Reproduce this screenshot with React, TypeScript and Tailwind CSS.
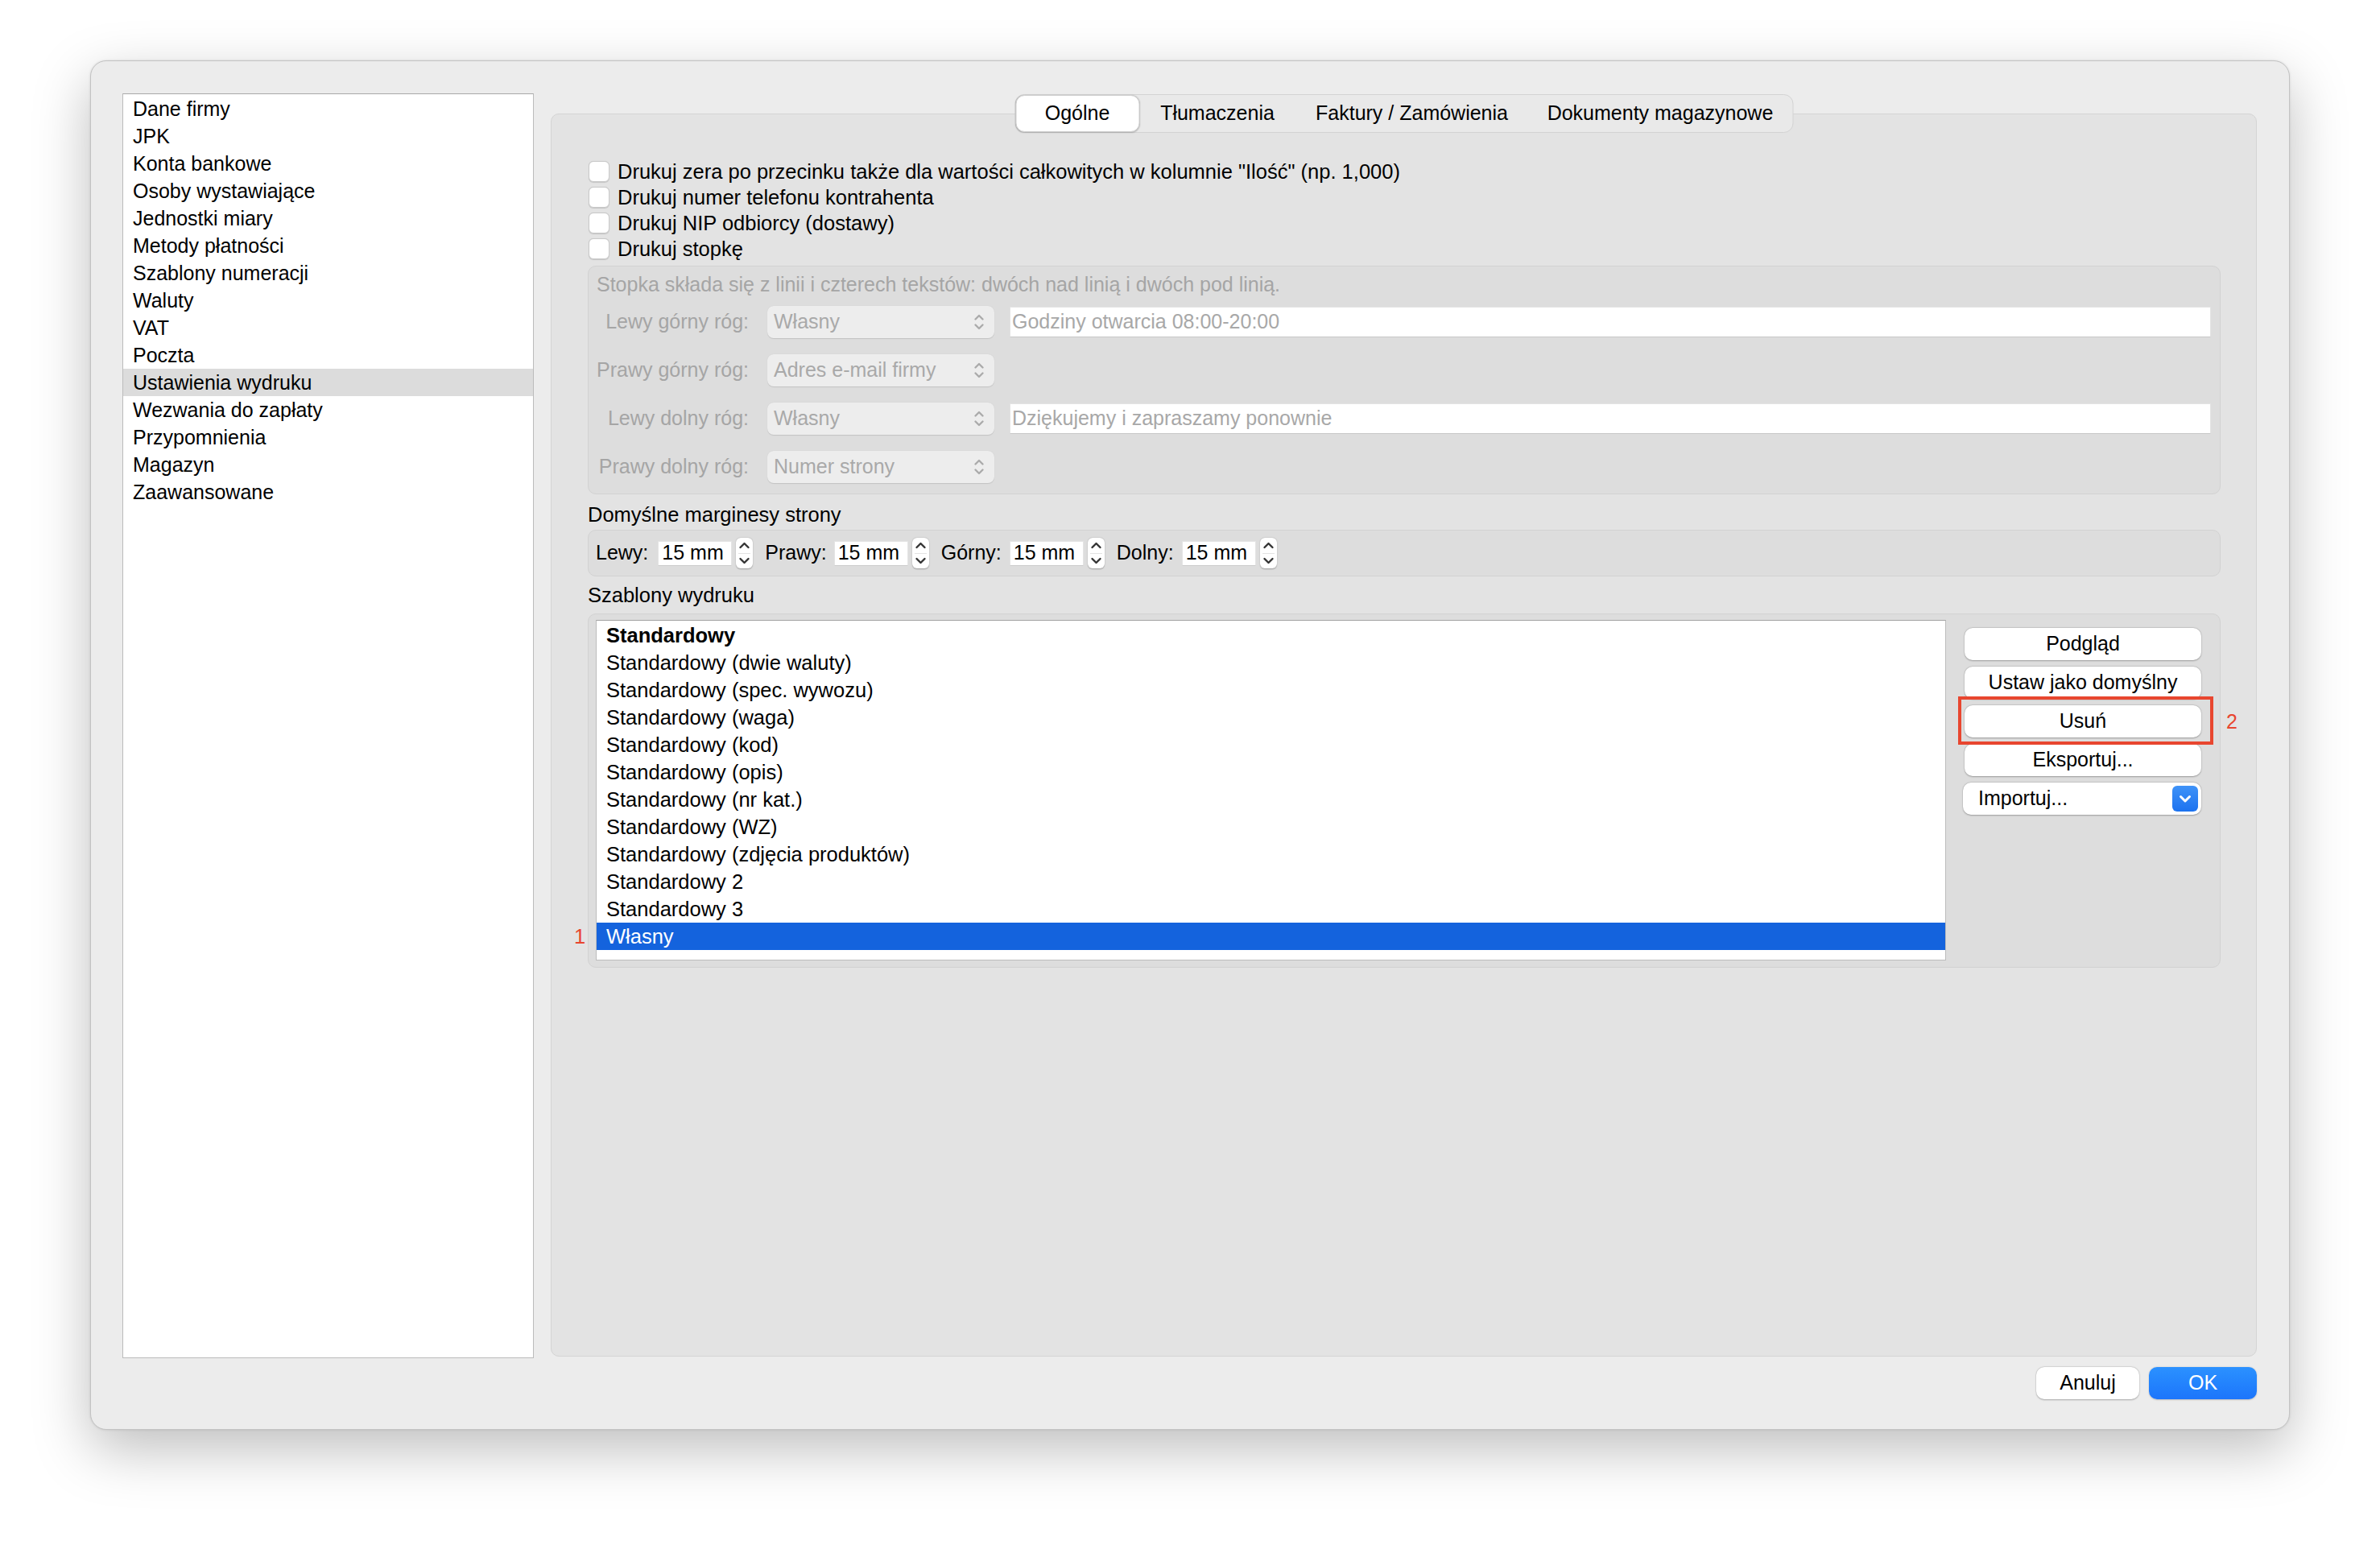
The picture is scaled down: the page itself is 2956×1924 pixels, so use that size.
import type { ReactNode } from "react";

const sidebarItems = [
  "Dane firmy",
  "JPK",
  "Konta bankowe",
  "Osoby wystawiające",
  "Jednostki miary",
  "Metody płatności",
  "Szablony numeracji",
  "Waluty",
  "VAT",
  "Poczta",
  "Ustawienia wydruku",
  "Wezwania do zapłaty",
  "Przypomnienia",
  "Magazyn",
  "Zaawansowane"
];

const tabs = [
  { label: "Ogólne", width: "w-[154px]", selected: true },
  { label: "Tłumaczenia", width: "w-[194px]", selected: false },
  { label: "Faktury / Zamówienia", width: "w-[289px]", selected: false },
  { label: "Dokumenty magazynowe", width: "w-[328px]", selected: false }
];

const checkboxes = [
  'Drukuj zera po przecinku także dla wartości całkowitych w kolumnie "Ilość" (np. 1,000)',
  "Drukuj numer telefonu kontrahenta",
  "Drukuj NIP odbiorcy (dostawy)",
  "Drukuj stopkę"
];

const footerRows: Array<{ label: string; value: string; text: string | null }> = [
  { label: "Lewy górny róg:", value: "Własny", text: "Godziny otwarcia 08:00-20:00" },
  { label: "Prawy górny róg:", value: "Adres e-mail firmy", text: null },
  { label: "Lewy dolny róg:", value: "Własny", text: "Dziękujemy i zapraszamy ponownie" },
  { label: "Prawy dolny róg:", value: "Numer strony", text: null }
];

const margins = [
  { label: "Lewy:", gap: "ml-[12px]" },
  { label: "Prawy:", gap: "ml-[9px]" },
  { label: "Górny:", gap: "ml-[10px]" },
  { label: "Dolny:", gap: "ml-[10px]" }
];

const templates = [
  "Standardowy",
  "Standardowy (dwie waluty)",
  "Standardowy (spec. wywozu)",
  "Standardowy (waga)",
  "Standardowy (kod)",
  "Standardowy (opis)",
  "Standardowy (nr kat.)",
  "Standardowy (WZ)",
  "Standardowy (zdjęcia produktów)",
  "Standardowy 2",
  "Standardowy 3",
  "Własny"
];

function UpDownChevrons({ className }: { className?: string }): JSX.Element {
  return (
    <svg viewBox="0 0 14 26" className={className} fill="none" strokeLinecap="round" strokeLinejoin="round">
      <path d="M2.5 9.5 L7 5 L11.5 9.5" stroke="currentColor" strokeWidth="2.4" />
      <path d="M2.5 16.5 L7 21 L11.5 16.5" stroke="currentColor" strokeWidth="2.4" />
    </svg>
  );
}

function Stepper(): JSX.Element {
  return (
    <div className="relative ml-[5px] flex h-[38px] w-[21px] flex-col items-center justify-between rounded-[6px] bg-white shadow-[0_0.5px_1.5px_rgba(0,0,0,0.3)]">
      <svg viewBox="0 0 21 19" className="h-[19px] w-[21px]" fill="none" strokeLinecap="round" strokeLinejoin="round">
        <path d="M5.5 12 L10.5 7 L15.5 12" stroke="#333" strokeWidth="2.4" />
      </svg>
      <div className="absolute left-[3px] right-[3px] top-[19px] h-px bg-[#e3e3e3]" />
      <svg viewBox="0 0 21 19" className="h-[19px] w-[21px]" fill="none" strokeLinecap="round" strokeLinejoin="round">
        <path d="M5.5 7 L10.5 12 L15.5 7" stroke="#333" strokeWidth="2.4" />
      </svg>
    </div>
  );
}

function PushButton({ children }: { children: ReactNode }): JSX.Element {
  return (
    <div className="flex h-[40px] w-full items-center justify-center rounded-[10px] bg-white text-black shadow-[0_0.5px_2px_rgba(0,0,0,0.28),0_0_0_0.5px_rgba(0,0,0,0.06)]">
      {children}
    </div>
  );
}

function Checkbox({ label }: { label: string }): JSX.Element {
  return (
    <div className="flex h-[32px] items-center">
      <div className="ml-px h-[26px] w-[26px] rounded-[6px] border border-[#c9c9c9] bg-white shadow-[0_0.5px_1px_rgba(0,0,0,0.14)]" />
      <span className="ml-[10px] whitespace-nowrap leading-[32px]">{label}</span>
    </div>
  );
}

export default function App(): JSX.Element {
  return (
    <div className="h-[1924px] w-[2956px] bg-white pl-[112px] pt-[75px] font-['Liberation_Sans',Arial,sans-serif] text-[25px] text-black">
      <div className="flex h-[1701px] w-[2732px] rounded-[20px] border border-[#c3c3c3] bg-[#ececec] pl-[39px] pt-[40px] shadow-[0_24px_70px_rgba(0,0,0,0.26),0_0_3px_rgba(0,0,0,0.12)]">
        {/* sidebar */}
        <div className="h-[1571px] w-[511px] shrink-0 border border-[#bcbcbc] border-t-[#a9a9a9] bg-white pt-px">
          {sidebarItems.map((item) => (
            <div
              key={item}
              className={
                item === "Ustawienia wydruku"
                  ? "h-[34px] bg-[#dcdcdc] pl-[12px] leading-[34px]"
                  : "h-[34px] pl-[12px] leading-[34px]"
              }
            >
              {item}
            </div>
          ))}
        </div>

        <div className="ml-[21px] flex flex-1 flex-col pr-[40px] pt-[25px]">
          {/* tab panel */}
          <div className="relative h-[1544px] rounded-[10px] border border-[#d4d4d4] bg-[#e3e3e3] pl-[45px] pr-[44px] pt-[55px] text-[25.5px]">
            <div className="absolute left-1/2 top-[-25px] flex h-[48px] -translate-x-1/2 items-stretch rounded-[12px] border border-[#d3d3d3] bg-[#e9e9e9] text-[25px]">
              {tabs.map((tab) =>
                tab.selected ? (
                  <div
                    key={tab.label}
                    className={`${tab.width} flex items-center justify-center rounded-[11px] border border-[#cfcfcf] bg-white shadow-[0_0.5px_1.5px_rgba(0,0,0,0.2)]`}
                  >
                    {tab.label}
                  </div>
                ) : (
                  <div key={tab.label} className={`${tab.width} flex items-center justify-center whitespace-nowrap`}>
                    {tab.label}
                  </div>
                )
              )}
            </div>

            {checkboxes.map((label) => (
              <Checkbox key={label} label={label} />
            ))}

            {/* footer settings (disabled) */}
            <div className="mt-[5px] rounded-[10px] border border-[#d2d2d2] bg-[#dddddd] pb-[13px] pl-[10px] pr-[11px] pt-[7px] text-[25px] text-[#a5a5a5]">
              <div className="h-[30px] whitespace-nowrap leading-[30px]">
                Stopka składa się z linii i czterech tekstów: dwóch nad linią i dwóch pod linią.
              </div>
              <div className="mt-[12px] flex flex-col gap-[20px]">
                {footerRows.map((row) => (
                  <div key={row.label} className="flex h-[40px] items-center">
                    <div className="w-[189px] shrink-0 whitespace-nowrap text-right">{row.label}</div>
                    <div className="ml-[23px] flex h-[40px] w-[282px] shrink-0 items-center justify-between rounded-[8px] bg-[#ededed] pl-[8px] pr-[12px] text-[#a9a9a9] shadow-[0_0.5px_1px_rgba(0,0,0,0.12)]">
                      <span className="whitespace-nowrap">{row.value}</span>
                      <UpDownChevrons className="h-[26px] w-[14px] text-[#ababab]" />
                    </div>
                    {row.text !== null ? (
                      <div className="ml-[19px] flex h-[38px] flex-1 items-center whitespace-nowrap border border-[#e3e3e3] border-b-[#c8c8c8] bg-white pl-[2px] text-[#a8a8a8]">
                        {row.text}
                      </div>
                    ) : null}
                  </div>
                ))}
              </div>
            </div>

            {/* margins */}
            <div className="mt-[10px] h-[30px] leading-[30px]">Domyślne marginesy strony</div>
            <div className="mt-[4px] flex h-[58px] items-center rounded-[10px] border border-[#d2d2d2] bg-[#dddddd] pl-[9px] text-[25px]">
              {margins.map((m, index) => (
                <div key={m.label} className={index === 0 ? "flex items-center" : "ml-[15px] flex items-center"}>
                  <span>{m.label}</span>
                  <div
                    className={`${m.gap} flex h-[31px] w-[92px] items-center border border-[#e4e4e4] border-b-[#cbcbcb] bg-white pl-[4px]`}
                  >
                    15 mm
                  </div>
                  <Stepper />
                </div>
              ))}
            </div>

            {/* templates */}
            <div className="mt-[8px] h-[30px] leading-[30px]">Szablony wydruku</div>
            <div className="mt-[8px] flex h-[440px] rounded-[10px] border border-[#d2d2d2] bg-[#dddddd] pl-[9px] pr-[23px] pt-[7px]">
              <div className="relative h-[423px] flex-1 border border-[#bcbcbc] border-t-[#a3a3a3] bg-white pt-px">
                {templates.map((name, index) =>
                  name === "Własny" ? (
                    <div key={name} className="relative h-[34px] bg-[#1463dd] pl-[12px] leading-[34px] text-white">
                      {name}
                      <span className="absolute left-[-28px] top-0 leading-[34px] text-[#e8462f]">1</span>
                    </div>
                  ) : (
                    <div
                      key={name}
                      className={index === 0 ? "h-[34px] pl-[12px] font-bold leading-[34px]" : "h-[34px] pl-[12px] leading-[34px]"}
                    >
                      {name}
                    </div>
                  )
                )}
              </div>

              <div className="ml-[23px] flex w-[294px] flex-col gap-[8px] pt-[10px] text-[25px]">
                <PushButton>Podgląd</PushButton>
                <PushButton>Ustaw jako domyślny</PushButton>
                <div className="relative">
                  <PushButton>Usuń</PushButton>
                  <div className="absolute bottom-[-9px] left-[-8px] right-[-15px] top-[-11px] border-[4px] border-[#e8462f]" />
                  <span className="absolute left-[325px] top-0 leading-[40px] text-[#e8462f]">2</span>
                </div>
                <PushButton>Eksportuj...</PushButton>
                <div className="ml-[-2px] flex h-[40px] items-center justify-between rounded-[10px] bg-white pl-[19px] pr-[4px] shadow-[0_0.5px_2px_rgba(0,0,0,0.28),0_0_0_0.5px_rgba(0,0,0,0.06)]">
                  <span>Importuj...</span>
                  <div className="flex h-[32px] w-[32px] items-center justify-center rounded-[6px] bg-gradient-to-b from-[#3e92f8] to-[#1c72ef]">
                    <svg viewBox="0 0 32 32" className="h-[32px] w-[32px]" fill="none" strokeLinecap="round" strokeLinejoin="round">
                      <path d="M10.5 13.5 L16 19 L21.5 13.5" stroke="white" strokeWidth="3" />
                    </svg>
                  </div>
                </div>
              </div>
            </div>
          </div>

          {/* dialog buttons */}
          <div className="mt-[13px] flex justify-end">
            <div className="flex h-[40px] w-[128px] items-center justify-center rounded-[10px] bg-white shadow-[0_0.5px_2px_rgba(0,0,0,0.28),0_0_0_0.5px_rgba(0,0,0,0.06)]">
              Anuluj
            </div>
            <div className="ml-[12px] flex h-[40px] w-[134px] items-center justify-center rounded-[10px] bg-gradient-to-b from-[#2b91ff] to-[#1d75fb] text-white shadow-[0_0.5px_2px_rgba(0,0,0,0.2)]">
              OK
            </div>
          </div>
        </div>
      </div>
    </div>
  );
}
